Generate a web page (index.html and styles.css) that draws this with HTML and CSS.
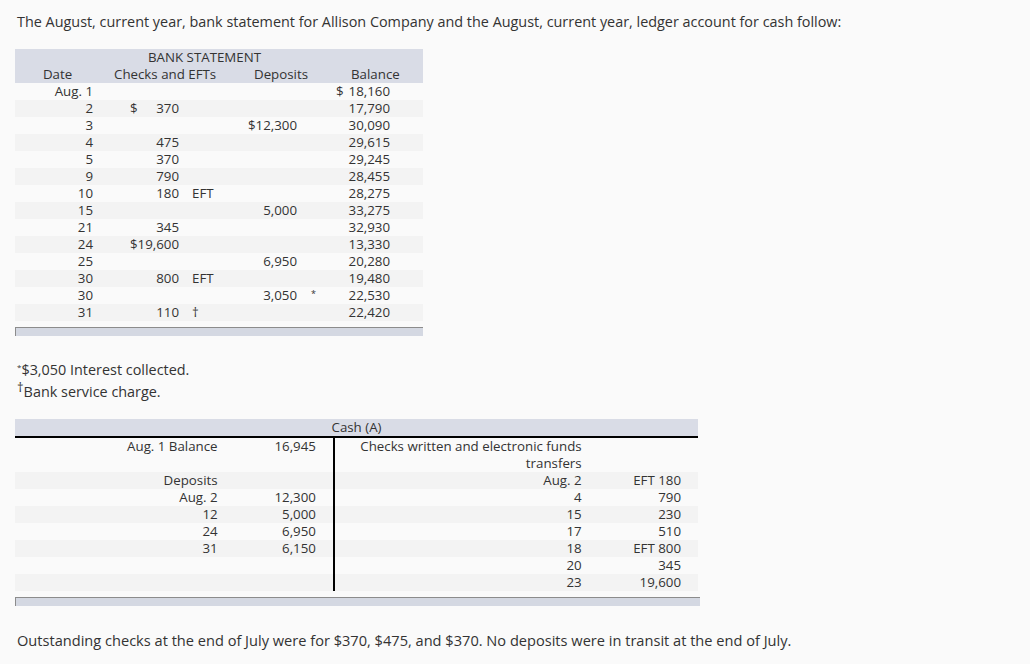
FILE: index.html
```html
<!DOCTYPE html>
<html>
<head>
<meta charset="utf-8">
<link rel="stylesheet" href="styles.css">
</head>
<body>
<div class="page">
  <p class="intro">The August, current year, bank statement for Allison Company and the August, current year, ledger account for cash follow:</p>

  <div class="bank-wrap">
    <table class="bank">
      <colgroup>
        <col class="c-date"><col class="c-chk"><col class="c-note"><col class="c-dep"><col class="c-star"><col class="c-bal"><col class="c-rest">
      </colgroup>
      <thead>
        <tr><th colspan="7" class="title">BANK STATEMENT</th></tr>
        <tr>
          <th class="h-date">Date</th>
          <th colspan="2" class="h-chk">Checks and EFTs</th>
          <th colspan="2" class="h-dep">Deposits</th>
          <th colspan="2" class="h-bal">Balance</th>
        </tr>
      </thead>
      <tbody>
        <tr><td class="date">Aug. 1</td><td class="amt"></td><td></td><td class="amt"></td><td></td><td class="amt split"><span>$</span><span>18,160</span></td><td></td></tr>
        <tr><td class="date">2</td><td class="amt split"><span>$</span><span>370</span></td><td></td><td class="amt"></td><td></td><td class="amt">17,790</td><td></td></tr>
        <tr><td class="date">3</td><td class="amt"></td><td></td><td class="amt">$12,300</td><td></td><td class="amt">30,090</td><td></td></tr>
        <tr><td class="date">4</td><td class="amt">475</td><td></td><td class="amt"></td><td></td><td class="amt">29,615</td><td></td></tr>
        <tr><td class="date">5</td><td class="amt">370</td><td></td><td class="amt"></td><td></td><td class="amt">29,245</td><td></td></tr>
        <tr><td class="date">9</td><td class="amt">790</td><td></td><td class="amt"></td><td></td><td class="amt">28,455</td><td></td></tr>
        <tr><td class="date">10</td><td class="amt">180</td><td class="note">EFT</td><td class="amt"></td><td></td><td class="amt">28,275</td><td></td></tr>
        <tr><td class="date">15</td><td class="amt"></td><td></td><td class="amt">5,000</td><td></td><td class="amt">33,275</td><td></td></tr>
        <tr><td class="date">21</td><td class="amt">345</td><td></td><td class="amt"></td><td></td><td class="amt">32,930</td><td></td></tr>
        <tr><td class="date">24</td><td class="amt">$19,600</td><td></td><td class="amt"></td><td></td><td class="amt">13,330</td><td></td></tr>
        <tr><td class="date">25</td><td class="amt"></td><td></td><td class="amt">6,950</td><td></td><td class="amt">20,280</td><td></td></tr>
        <tr><td class="date">30</td><td class="amt">800</td><td class="note">EFT</td><td class="amt"></td><td></td><td class="amt">19,480</td><td></td></tr>
        <tr><td class="date">30</td><td class="amt"></td><td></td><td class="amt">3,050</td><td class="star">*</td><td class="amt">22,530</td><td></td></tr>
        <tr><td class="date">31</td><td class="amt">110</td><td class="note">†</td><td class="amt"></td><td></td><td class="amt">22,420</td><td></td></tr>
      </tbody>
    </table>
    <div class="scrollbar bank-scroll"></div>
  </div>

  <div class="notes">
    <p><sup class="ast">*</sup>$3,050 Interest collected.</p>
    <p><sup class="dag">†</sup>Bank service charge.</p>
  </div>

  <div class="cash-wrap">
    <table class="cash">
      <colgroup>
        <col class="k-a"><col class="k-b"><col class="k-c"><col class="k-d">
      </colgroup>
      <thead>
        <tr><th colspan="4">Cash (A)</th></tr>
      </thead>
      <tbody>
        <tr><td class="lab">Aug. 1 Balance<br>&nbsp;</td><td class="val lft">16,945<br>&nbsp;</td><td class="lab">Checks written and electronic funds<br>transfers</td><td class="val">&nbsp;<br>&nbsp;</td></tr>
        <tr><td class="lab">Deposits</td><td class="val lft"></td><td class="lab">Aug. 2</td><td class="val">EFT 180</td></tr>
        <tr><td class="lab">Aug. 2</td><td class="val lft">12,300</td><td class="lab">4</td><td class="val">790</td></tr>
        <tr><td class="lab">12</td><td class="val lft">5,000</td><td class="lab">15</td><td class="val">230</td></tr>
        <tr><td class="lab">24</td><td class="val lft">6,950</td><td class="lab">17</td><td class="val">510</td></tr>
        <tr><td class="lab">31</td><td class="val lft">6,150</td><td class="lab">18</td><td class="val">EFT 800</td></tr>
        <tr><td class="lab"></td><td class="val lft"></td><td class="lab">20</td><td class="val">345</td></tr>
        <tr><td class="lab"></td><td class="val lft"></td><td class="lab">23</td><td class="val">19,600</td></tr>
      </tbody>
    </table>
    <div class="scrollbar cash-scroll"></div>
  </div>

  <p class="outro">Outstanding checks at the end of July were for $370, $475, and $370. No deposits were in transit at the end of July.</p>
</div>
</body>
</html>
```

FILE: styles.css
```css
html, body {
  margin: 0;
  padding: 0;
  background: #fafafa;
}
body {
  font-family: "Open Sans", Lato, "Liberation Sans", sans-serif;
  color: #333;
}
.page {
  padding: 12px 15px 0 15px;
}
.intro {
  margin: 0 0 0 2px;
  font-size: 14.4px;
  line-height: 20px;
}
.bank-wrap {
  margin-top: 17px;
  width: 408px;
}
table {
  border-collapse: collapse;
  table-layout: fixed;
  font-size: 13.3px;
  line-height: 17px;
}
th {
  font-weight: normal;
  padding: 0;
}
td {
  padding: 0;
  height: 17px;
  white-space: nowrap;
}
.bank {
  width: 408px;
}
.c-date { width: 85px; }
.c-chk { width: 84px; }
.c-note { width: 56px; }
.c-dep { width: 62px; }
.c-star { width: 28px; }
.c-bal { width: 65px; }
.c-rest { width: 28px; }
.bank thead tr {
  background: #d9dce6;
}
.bank .title {
  text-align: left;
  padding-left: 133px;
}
.h-date { text-align: center; padding-left: 0; }
.h-chk { text-align: left; padding-left: 14px; }
.h-dep { text-align: left; padding-left: 14px; }
.h-bal { text-align: left; padding-left: 21px; }
.bank tbody tr:nth-child(odd),
.cash tbody tr:nth-child(odd) {
  background: #fafafa;
}
.bank tbody tr:nth-child(even),
.cash tbody tr:nth-child(even) {
  background: #f3f3f3;
}
.date {
  text-align: right;
  padding-right: 7px;
}
.amt {
  text-align: right;
  padding-right: 5px;
}
.bank tr td:nth-child(2).split {
  padding-left: 30px;
}
.split span:first-child {
  float: left;
}
.bank tr td:nth-child(6).split {
  padding-left: 6px;
}
.note {
  padding-left: 8px;
}
.star {
  padding-left: 9px;
  font-size: 9px;
  vertical-align: top;
  line-height: 14px;
}
.scrollbar {
  box-sizing: border-box;
  height: 9px;
  border-top: 1px solid #8c8c8c;
  border-left: 1px solid #8c8c8c;
  background: #d4d8e2;
}
.bank-scroll {
  margin-top: 6px;
  width: 408px;
}
.notes {
  margin-top: 23px;
  margin-left: 2px;
  font-size: 14.4px;
}
.notes p {
  margin: 0;
  line-height: 22px;
}
.ast {
  font-size: 8px;
  vertical-align: 5px;
  line-height: 0;
}
.dag {
  font-size: 13px;
  vertical-align: 5px;
  line-height: 0;
}
.cash-wrap {
  margin-top: 16px;
}
.cash {
  width: 683px;
}
.k-a { width: 210px; }
.k-b { width: 108px; }
.k-c { width: 255px; }
.k-d { width: 108px; }
.cash thead tr {
  background: #d9dce6;
}
.cash th {
  text-align: center;
  height: 17px;
  border-bottom: 2px solid #000;
}
.lab {
  text-align: right;
  padding-right: 8px;
}
.val {
  text-align: right;
  padding-right: 17px;
}
.val.lft {
  border-right: 2px solid #000;
}
.cash-scroll {
  margin-top: 6px;
  width: 685px;
}
.outro {
  margin: 24px 0 0 2px;
  font-size: 14.6px;
  line-height: 20px;
}
```
